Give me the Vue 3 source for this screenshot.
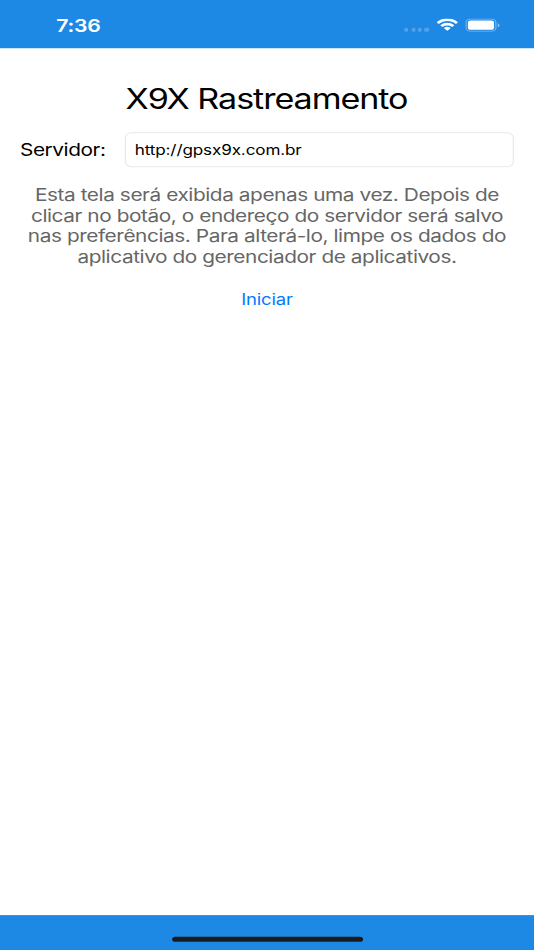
<template>
  <div class="viewport">
    <div class="screen">
      <header class="status-bar">
        <span class="time">7:36</span>
        <div class="indicators">
          <div class="signal">
            <i v-for="n in 4" :key="n" class="dot"></i>
          </div>
          <svg class="wifi" viewBox="0 0 17 12.4" fill="#fff">
            <path d="M8.5 2.55c2.47 0 4.84.95 6.63 2.65.13.13.35.13.48 0l1.28-1.3a.36.36 0 0 0 0-.51 12.17 12.17 0 0 0-16.78 0 .36.36 0 0 0 0 .51L1.4 5.2c.13.13.35.13.48 0A9.6 9.6 0 0 1 8.5 2.55Z" />
            <path d="M8.5 6.75c1.35 0 2.66.5 3.67 1.41.13.13.35.13.49 0l1.29-1.3a.36.36 0 0 0 0-.52 7.92 7.92 0 0 0-10.89 0 .36.36 0 0 0 0 .52l1.29 1.3c.14.13.35.13.49 0A5.48 5.48 0 0 1 8.5 6.75Z" />
            <path d="M11.02 9.6a.36.36 0 0 0-.01-.53 3.83 3.83 0 0 0-5.02 0 .36.36 0 0 0-.01.53l2.27 2.3c.14.13.36.13.5 0l2.27-2.3Z" />
          </svg>
          <svg class="battery" viewBox="0 0 28 13">
            <rect x="0.5" y="0.5" width="24" height="12" rx="3.6" fill="none" stroke="#fff" stroke-opacity="0.4" />
            <rect x="2" y="2" width="21" height="9" rx="2.3" fill="#fff" />
            <path d="M26 4.6v4c.8-.33 1.35-1.1 1.35-2S26.8 4.93 26 4.6Z" fill="#fff" fill-opacity="0.5" />
          </svg>
        </div>
      </header>

      <main class="content">
        <h1 class="title">X9X Rastreamento</h1>
        <div class="field">
          <label class="label" for="server">Servidor:</label>
          <input id="server" v-model="server" class="input" type="text" spellcheck="false" />
        </div>
        <p class="note">
          <span v-for="line in note" :key="line" class="line">{{ line }}</span>
        </p>
        <button class="start" type="button">Iniciar</button>
      </main>

      <footer class="bottom-bar">
        <div class="home-indicator"></div>
      </footer>
    </div>
  </div>
</template>

<script setup>
import { ref } from 'vue';

const server = ref('http://gpsx9x.com.br');

const note = [
  'Esta tela será exibida apenas uma vez. Depois de',
  'clicar no botão, o endereço do servidor será salvo',
  'nas preferências. Para alterá-lo, limpe os dados do',
  'aplicativo do gerenciador de aplicativos.'
];
</script>

<style>
body {
  margin: 0;
  background: #fff;
}
</style>

<style scoped>
.viewport {
  width: 534px;
  height: 950px;
  overflow: hidden;
}

/* 428x926 points stretched over the viewport */
.screen {
  display: flex;
  flex-direction: column;
  width: 428px;
  height: 926px;
  transform: scale(1.24766, 1.02592);
  transform-origin: 0 0;
  background: #fff;
  color: #000;
  font-family: Inter, "Liberation Sans", sans-serif;
}

.status-bar {
  display: flex;
  justify-content: space-between;
  box-sizing: border-box;
  height: 47px;
  padding: 0 27.5px 0 45px;
  background: #1e88e5;
}

.time {
  padding-top: 15px;
  color: #fff;
  font-size: 17px;
  font-weight: 600;
  line-height: 21px;
  letter-spacing: -0.2px;
}

.indicators {
  display: flex;
  align-items: flex-start;
  padding-top: 18px;
}

.signal {
  display: flex;
  gap: 2.2px;
  margin: 9.4px 6.4px 0 0;
}

.dot {
  width: 3.2px;
  height: 3.6px;
  border-radius: 1.2px;
  background: rgba(255, 255, 255, 0.22);
}

.wifi {
  width: 17px;
  height: 12.4px;
  margin-right: 5.6px;
}

.battery {
  width: 28px;
  height: 13px;
}

.content {
  display: flex;
  flex: 1;
  flex-direction: column;
  align-items: center;
  padding: 0 16px;
}

.title {
  margin: 33px 0 0;
  font-size: 27.3px;
  font-weight: 400;
  line-height: 34px;
  letter-spacing: -0.83px;
  text-indent: -0.8px;
}

.field {
  display: flex;
  align-items: center;
  width: 100%;
  margin-top: 15px;
}

.label {
  width: 84px;
  font-size: 16.7px;
  letter-spacing: -0.35px;
}

.input {
  flex: 1;
  box-sizing: border-box;
  min-width: 0;
  height: 34px;
  padding: 0 7px;
  border: 1px solid #e9e9e9;
  border-radius: 5.5px;
  outline: none;
  background: #fff;
  color: #000;
  font: inherit;
  font-size: 13.7px;
  letter-spacing: -0.1px;
}

.note {
  margin: 16.5px 0 0;
  color: #666;
  font-size: 16.7px;
  line-height: 20.3px;
  letter-spacing: -0.35px;
  text-align: center;
}

.line {
  display: block;
  white-space: nowrap;
}

.start {
  margin-top: 16.2px;
  padding: 6px 0;
  border: 0;
  background: none;
  color: #007aff;
  font: inherit;
  font-size: 14.8px;
  line-height: 18px;
  letter-spacing: -0.15px;
}

.bottom-bar {
  display: flex;
  align-items: flex-end;
  justify-content: center;
  box-sizing: border-box;
  height: 34px;
  padding-bottom: 8px;
  background: #1e88e5;
}

.home-indicator {
  width: 153px;
  height: 5px;
  border-radius: 2.5px;
  background: #1b1b1d;
}
</style>
